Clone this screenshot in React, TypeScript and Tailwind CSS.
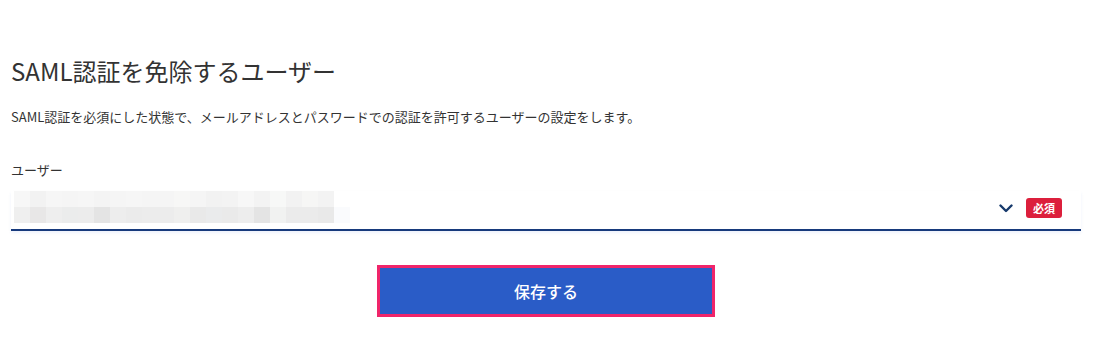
import React from "react";

const rowTop = [
  "#f7f7f7", "#f2f2f2", "#f6f6f6", "#f5f5f5", "#f6f6f6", "#f4f4f4", "#f5f5f5", "#f6f6f6",
  "#f5f5f5", "#f5f5f5", "#f7f7f6", "#f5f5f5", "#f2f2f2", "#f3f3f3", "#f7f7f7", "#f3f3f3",
  "#f7f8f7", "#f2f2f2", "#f6f6f5", "#f3f3f3",
];
const rowBottom = [
  "#efefef", "#e8e7e7", "#eeeeee", "#ebecec", "#ececec", "#e4e4e4", "#ededed", "#ebebeb",
  "#ececec", "#ececec", "#efefee", "#e9e9e9", "#eaebec", "#eaeaea", "#ededed", "#e4e4e4",
  "#f1f2f1", "#ebebeb", "#ebebeb", "#e9e9e9", "#fafbfd",
];

const MaskedValue: React.FC = () => (
  <div className="flex flex-col">
    <div className="flex">
      {rowTop.map((c, i) => (
        <div key={i} className="h-4 w-4" style={{ backgroundColor: c }} />
      ))}
    </div>
    <div className="flex">
      {rowBottom.map((c, i) => (
        <div key={i} className="h-4 w-4" style={{ backgroundColor: c }} />
      ))}
    </div>
  </div>
);

export default function App() {
  return (
    <div
      className="w-[1095px] h-[344px] bg-white text-[#333] overflow-hidden"
      style={{ fontFamily: '"Noto Sans CJK JP", "Noto Sans", sans-serif' }}
    >
      <div className="pl-[11px] pr-[14px] pt-[54px]">
        <h1 className="text-[24px] leading-[34px] text-[#333]">
          SAML認証を免除するユーザー
        </h1>

        <p className="mt-[20px] text-[13px] leading-[18px] text-[#333]">
          SAML認証を必須にした状態で、メールアドレスとパスワードでの認証を許可するユーザーの設定をします。
        </p>

        {/* ユーザー */}
        <div className="mt-[35px]">
          <label className="block text-[13px] leading-[18px] text-[#333]">ユーザー</label>
          <div className="mt-[12px] flex items-end justify-between border-b-2 border-[#173a7c] shadow-[0_2px_3px_rgba(40,90,200,0.08)] pb-[6px] pl-[3px]">
            <MaskedValue />
            <div className="flex items-center gap-[13px] mb-[5px] mr-[19px]">
              <svg width="14" height="9" viewBox="0 0 14 9" fill="none">
                <path d="M1.5 1.5 L7 7 L12.5 1.5" stroke="#173a6c" strokeWidth="2.4" strokeLinecap="round" strokeLinejoin="round" />
              </svg>
              <span className="flex h-[20px] w-[36px] items-center justify-center rounded-[3px] bg-[#dc1f3c] text-[11px] font-bold text-white">
                必須
              </span>
            </div>
          </div>
        </div>
      </div>

      <div className="mt-[34px] flex justify-center pr-[3px]">
        <button className="h-[52px] w-[338px] border-[3px] border-[#f0256a] bg-[#2a5cc7] text-[16px] font-medium text-white">
          保存する
        </button>
      </div>
    </div>
  );
}
